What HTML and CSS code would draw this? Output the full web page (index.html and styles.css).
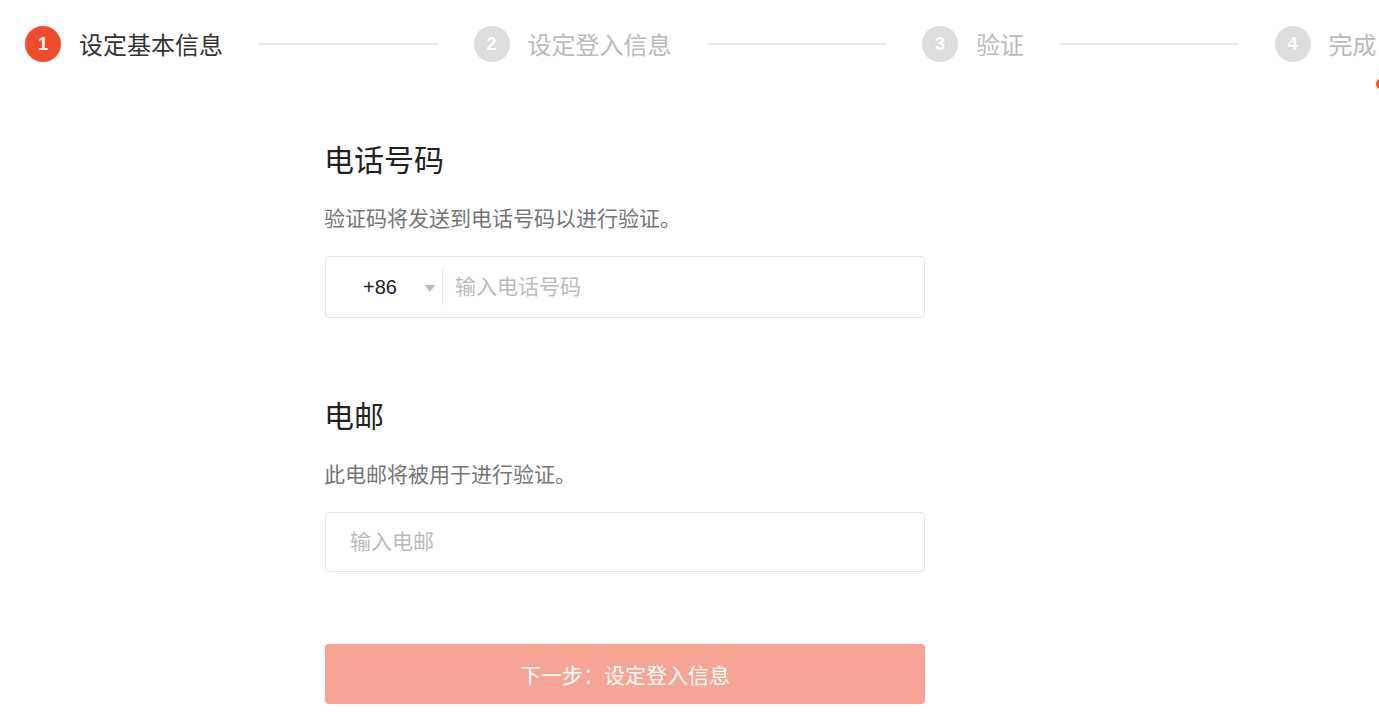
FILE: index.html
```html
<!DOCTYPE html>
<html>
  <head>
    <meta charset="UTF-8">
    <title>注册</title>
    <link rel="stylesheet" href="styles.css">
  </head>
  <body>
    <div class="stepper">
      <div class="step active">
        <span class="step-num">1</span>
        <span class="step-label">设定基本信息</span>
      </div>
      <div class="step-line"></div>
      <div class="step">
        <span class="step-num">2</span>
        <span class="step-label">设定登入信息</span>
      </div>
      <div class="step-line"></div>
      <div class="step">
        <span class="step-num">3</span>
        <span class="step-label">验证</span>
      </div>
      <div class="step-line"></div>
      <div class="step">
        <span class="step-num">4</span>
        <span class="step-label">完成</span>
      </div>
    </div>
    <span class="edge-dot"></span>

    <form class="container">
      <section class="field">
        <h2>电话号码</h2>
        <p class="hint">验证码将发送到电话号码以进行验证。</p>
        <div class="input-box phone">
          <div class="country">
            <span class="code">+86</span>
            <span class="caret"></span>
          </div>
          <input type="tel" placeholder="输入电话号码">
        </div>
      </section>

      <section class="field">
        <h2>电邮</h2>
        <p class="hint">此电邮将被用于进行验证。</p>
        <div class="input-box">
          <input type="email" placeholder="输入电邮">
        </div>
      </section>

      <button type="submit" class="next-btn">下一步：设定登入信息</button>
    </form>
  </body>
</html>
```

FILE: styles.css
```css
body {
  font-family: 'Liberation Sans', 'Noto Sans CJK SC', sans-serif;
  background-color: #FFFFFF;
  margin: 0;
  color: #333333;
}

.stepper {
  display: flex;
  align-items: center;
  padding: 26px 0 0 25px;
}

.step {
  display: flex;
  align-items: center;
  gap: 18px;
}

.step-num {
  width: 36px;
  height: 36px;
  border-radius: 50%;
  background-color: #DDDDDD;
  color: #FFFFFF;
  font-size: 18px;
  font-weight: bold;
  display: flex;
  align-items: center;
  justify-content: center;
}

.step-label {
  font-family: 'Noto Sans CJK SC', sans-serif;
  font-size: 24px;
  line-height: 36px;
  color: #BBBBBB;
}

.step.active .step-num {
  background-color: #EE4D2D;
}

.step.active .step-label {
  color: #333333;
}

.step-line {
  width: 178.5px;
  height: 2px;
  margin: 0 36px;
  background-color: #E8E8E8;
}

.edge-dot {
  position: absolute;
  left: 1376px;
  top: 79px;
  width: 8px;
  height: 10px;
  border-radius: 50%;
  background-color: #F05D2D;
}

.container {
  width: 600px;
  margin: 76px 0 0 325px;
  display: flex;
  flex-direction: column;
}

.field h2 {
  font-family: 'Noto Sans CJK SC', sans-serif;
  font-size: 30px;
  font-weight: normal;
  line-height: 40px;
  margin: 0 0 0 -1px;
  color: #222222;
}

.field + .field {
  margin-top: 76px;
}

.hint {
  font-family: 'Noto Sans CJK SC', sans-serif;
  font-size: 21px;
  line-height: 28px;
  margin: 25px 0 25px -1px;
  color: #757575;
}

.input-box {
  display: flex;
  align-items: center;
  height: 60px;
  border: 1px solid #E5E5E5;
  border-radius: 4px;
  box-sizing: border-box;
}

.input-box.phone {
  height: 62px;
}

.input-box input {
  flex: 1;
  border: none;
  outline: none;
  height: 100%;
  padding: 0 24px;
  font-family: 'Liberation Sans', 'Noto Sans CJK SC', sans-serif;
  font-size: 21px;
  color: #333333;
  background: transparent;
}

.input-box input::placeholder {
  color: #BBBBBB;
}

.phone input {
  padding-left: 12px;
}

.country {
  display: flex;
  align-items: center;
  height: 36px;
  padding: 0 7px 0 37px;
  border-right: 1px solid #E5E5E5;
}

.code {
  font-size: 20px;
  color: #222222;
  width: 62px;
}

.caret {
  width: 0;
  height: 0;
  border-left: 5px solid transparent;
  border-right: 5px solid transparent;
  border-top: 7px solid #BBBBBB;
  margin-top: 2px;
}

.next-btn {
  margin-top: 72px;
  height: 60px;
  border: none;
  border-radius: 4px;
  background-color: #F6A594;
  color: #FFFFFF;
  font-family: 'Noto Sans CJK SC', sans-serif;
  font-size: 21px;
  cursor: pointer;
}
```
